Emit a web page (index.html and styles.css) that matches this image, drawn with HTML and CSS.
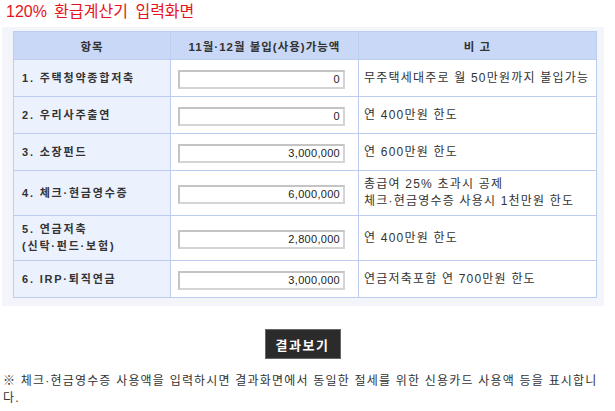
FILE: index.html
```html
<!DOCTYPE html>
<html lang="ko">
<head>
    <meta charset="UTF-8">
    <meta name="viewport" content="width=device-width, initial-scale=1.0">
    <title>120% 환급계산기 입력화면</title>
    <link rel="stylesheet" href="styles.css">
</head>
<body>
    <!-- 제목 -->
    <h1 class="page-title">120% 환급계산기 입력화면</h1>

    <!-- 입력표 -->
    <div class="form-box">
        <table class="input-table">
            <thead>
                <tr>
                    <th class="col-item">항목</th>
                    <th class="col-amount">11월·12월 불입(사용)가능액</th>
                    <th class="col-note">비 고</th>
                </tr>
            </thead>
            <tbody>
                <tr class="row">
                    <td class="item">1. 주택청약종합저축</td>
                    <td class="amount"><input type="text" value="0"></td>
                    <td class="note">무주택세대주로 월 50만원까지 불입가능</td>
                </tr>
                <tr class="row">
                    <td class="item">2. 우리사주출연</td>
                    <td class="amount"><input type="text" value="0"></td>
                    <td class="note">연 400만원 한도</td>
                </tr>
                <tr class="row">
                    <td class="item">3. 소장펀드</td>
                    <td class="amount"><input type="text" value="3,000,000"></td>
                    <td class="note">연 600만원 한도</td>
                </tr>
                <tr class="row tall">
                    <td class="item">4. 체크·현금영수증</td>
                    <td class="amount"><input type="text" value="6,000,000"></td>
                    <td class="note">총급여 25% 초과시 공제<br>체크·현금영수증 사용시 1천만원 한도</td>
                </tr>
                <tr class="row tall">
                    <td class="item">5. 연금저축<br>(신탁·펀드·보험)</td>
                    <td class="amount"><input type="text" value="2,800,000"></td>
                    <td class="note">연 400만원 한도</td>
                </tr>
                <tr class="row">
                    <td class="item">6. IRP·퇴직연금</td>
                    <td class="amount"><input type="text" value="3,000,000"></td>
                    <td class="note">연금저축포함 연 700만원 한도</td>
                </tr>
            </tbody>
        </table>
    </div>

    <!-- 버튼 -->
    <div class="btn-area">
        <button class="btn-result">결과보기</button>
    </div>

    <!-- 안내문 -->
    <p class="notice">※ 체크·현금영수증 사용액을 입력하시면 결과화면에서 동일한 절세를 위한 신용카드 사용액 등을 표시합니다.</p>
</body>
</html>
```

FILE: styles.css
```css
/* 기본 */
body {
    margin: 0;
    padding: 0;
    background-color: #fff;
    color: #333;
    font-family: "Liberation Sans", "Noto Sans CJK KR", sans-serif;
}

/* 제목 */
.page-title {
    margin: 0;
    padding: 2px 6px 0;
    height: 25px;
    font-size: 16px;
    font-weight: normal;
    line-height: 20px;
    word-spacing: 3px;
    color: #e5141c;
}

/* 입력표 영역 */
.form-box {
    margin-left: 2px;
    width: 584px;
    padding: 4px 7px 8px 11px;
    background-color: #f3f5fa;
}

.input-table {
    width: 584px;
    border-collapse: collapse;
    table-layout: fixed;
    font-size: 11px;
}

.input-table th,
.input-table td {
    border: 1px solid #bccdf0;
}

.input-table th {
    height: 27px;
    padding: 0;
    background-color: #c9d8f6;
    font-weight: bold;
    font-size: 11.5px;
    letter-spacing: 1px;
    color: #333;
}

.col-item { width: 156px; }
.col-amount { width: 187px; }

.row td {
    height: 36px;
    padding: 0;
}

.row.tall td {
    height: 44px;
}

.item {
    padding-left: 8px !important;
    background-color: #ebf1fd;
    font-weight: bold;
    letter-spacing: 1.8px;
    line-height: 17px;
}

.amount {
    padding-left: 7px !important;
    background-color: #fff;
}

.amount input {
    display: block;
    box-sizing: border-box;
    width: 167px;
    height: 19px;
    margin-top: 2px;
    padding: 0 3px;
    border: 2px solid #d4d4d4;
    border-top-color: #c4c4c4;
    border-left-color: #c4c4c4;
    text-align: right;
    font-family: "Liberation Sans", "Noto Sans CJK KR", sans-serif;
    font-size: 11px;
    letter-spacing: 0.3px;
    color: #222;
    background-color: #fff;
}

.note {
    padding-left: 5px !important;
    background-color: #fff;
    font-size: 12px;
    letter-spacing: 1.2px;
    line-height: 17px;
}

/* 버튼 */
.btn-area {
    padding-top: 23px;
    text-align: center;
}

.btn-result {
    width: 76px;
    height: 30px;
    margin-right: 10px;
    border: 1px solid #666;
    background-color: #2b2b2b;
    color: #fff;
    font-family: "Liberation Sans", "Noto Sans CJK KR", sans-serif;
    font-size: 13px;
    font-weight: bold;
    letter-spacing: 1.5px;
    cursor: pointer;
}

/* 안내문 */
.notice {
    margin: 14px 0 0;
    padding: 0 10px 0 3px;
    font-size: 12px;
    line-height: 17px;
    letter-spacing: 1.2px;
    color: #333;
}
```
